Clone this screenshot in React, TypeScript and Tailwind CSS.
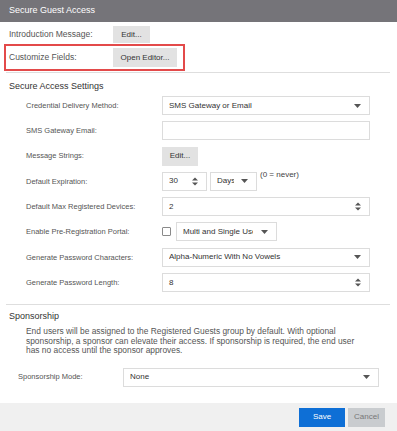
import React from "react";

const Caret = () => (
  <svg width="7" height="4" viewBox="0 0 7 4" className="shrink-0">
    <path d="M0 0H7L3.5 4Z" fill="#555" />
  </svg>
);

const Spinner = () => (
  <svg width="6" height="9" viewBox="0 0 6 9" className="shrink-0">
    <path d="M0 3.5L3 0.5L6 3.5Z" fill="#555" />
    <path d="M0 5.5L3 8.5L6 5.5Z" fill="#555" />
  </svg>
);

const Select = ({ value, w = "w-[208px]" }: { value: string; w?: string }) => (
  <div className={`${w} h-[19px] border border-[#dcdcdc] bg-white flex items-center pl-[6px] pr-[8px] text-[8px] text-[#333] overflow-hidden`}>
    <span className="flex-1 whitespace-nowrap overflow-hidden">{value}</span>
    <Caret />
  </div>
);

const Num = ({ value, w = "w-[208px]" }: { value: string; w?: string }) => (
  <div className={`${w} h-[19px] border border-[#dcdcdc] bg-white flex items-center pl-[6px] pr-[8px] text-[8px] text-[#333]`}>
    <span className="flex-1">{value}</span>
    <Spinner />
  </div>
);

const Btn = ({ children, w, h = "h-[19px]" }: { children: React.ReactNode; w: string; h?: string }) => (
  <div className={`${w} ${h} bg-[#e2e2e2] flex items-center justify-center text-[8px] text-[#333]`}>{children}</div>
);

const Row = ({ label, children }: { label: string; children: React.ReactNode }) => (
  <div className="flex items-center h-[19px]">
    <div className="w-[162px] shrink-0 pl-[26px] text-[7.5px] text-[#555] whitespace-nowrap">{label}</div>
    {children}
  </div>
);

export default function App() {
  return (
    <div
      className="w-[397px] h-[431px] bg-white relative overflow-hidden flex flex-col"
      style={{ fontFamily: '"Liberation Sans", Arial, sans-serif' }}
    >
      <div className="h-[22px] bg-[#757479] flex items-center pl-[9px] text-[9px] text-white shrink-0">
        Secure Guest Access
      </div>

      <div className="flex items-center h-[17px] mt-[4px]">
        <div className="w-[113px] shrink-0 pl-[9px] text-[8.5px] text-[#555]">Introduction Message:</div>
        <Btn w="w-[37px]" h="h-[17px]">Edit...</Btn>
      </div>

      <div className="flex items-center h-[19px] mt-[5px]">
        <div className="w-[113px] shrink-0 pl-[9px] text-[8.5px] text-[#555]">Customize Fields:</div>
        <Btn w="w-[64px]">Open Editor...</Btn>
      </div>

      <div className="mx-[6px] mt-[5px] h-px bg-[#dedede] w-[384px]" />

      <div className="pl-[9px] text-[9px] text-[#333] mt-[8px] leading-[10px]">Secure Access Settings</div>

      <div className="flex flex-col gap-[6.3px] mt-[5px]">
        <Row label="Credential Delivery Method:">
          <Select value="SMS Gateway or Email" />
        </Row>
        <Row label="SMS Gateway Email:">
          <div className="w-[208px] h-[19px] border border-[#dcdcdc] bg-white" />
        </Row>
        <Row label="Message Strings:">
          <Btn w="w-[36px]">Edit...</Btn>
        </Row>
        <Row label="Default Expiration:">
          <Num value="30" w="w-[45px]" />
          <div className="ml-[3px] w-[47px] h-[19px] border border-[#dcdcdc] bg-white flex items-center pl-[6px] pr-[8px] text-[8px] text-[#333]">
            <span className="w-[17px] shrink-0 whitespace-nowrap overflow-hidden">Days</span>
            <span className="flex-1" />
            <Caret />
          </div>
          <div className="ml-[3px] text-[8px] text-[#444] self-start leading-[10px] -mt-[2px]">(0 = never)</div>
        </Row>
        <Row label="Default Max Registered Devices:">
          <Num value="2" />
        </Row>
        <Row label="Enable Pre-Registration Portal:">
          <div className="w-[9px] h-[9px] border border-[#8a8a8a] rounded-[1px] bg-white" />
          <div className="ml-[5px] w-[101px] h-[19px] border border-[#dcdcdc] bg-white flex items-center pl-[6px] pr-[8px] text-[8px] text-[#333]">
            <span className="w-[70px] shrink-0 whitespace-nowrap overflow-hidden">Multi and Single User</span>
            <span className="flex-1" />
            <Caret />
          </div>
        </Row>
        <Row label="Generate Password Characters:">
          <Select value="Alpha-Numeric With No Vowels" />
        </Row>
        <Row label="Generate Password Length:">
          <Num value="8" />
        </Row>
      </div>

      <div className="mx-[6px] mt-[12px] h-px bg-[#dedede] w-[384px]" />

      <div className="pl-[9px] text-[9px] text-[#333] mt-[6px] leading-[10px]">Sponsorship</div>

      <div className="pl-[26px] pr-[30px] text-[8.4px] text-[#555] leading-[9.5px] mt-[6px]">
        End users will be assigned to the Registered Guests group by default. With optional sponsorship, a sponsor can elevate their access. If sponsorship is required, the end user has no access until the sponsor approves.
      </div>

      <div className="flex items-center h-[19px] mt-[12px]">
        <div className="w-[123px] shrink-0 pl-[18px] text-[7.5px] text-[#555]">Sponsorship Mode:</div>
        <Select value="None" w="w-[256px]" />
      </div>

      <div className="flex-1" />

      <div className="h-[28px] bg-[#f0f0f0] flex items-center justify-end pr-[12px] gap-[3px] shrink-0">
        <div className="w-[46px] h-[19px] bg-[#0e6fd6] text-white text-[8px] flex items-center justify-center">Save</div>
        <div className="w-[37px] h-[19px] bg-[#c9cccf] text-[#777] text-[8px] flex items-center justify-center">Cancel</div>
      </div>

      <div className="absolute left-[4px] top-[44px] w-[181px] h-[27px] border-2 border-[#e34a4a]" />
    </div>
  );
}
